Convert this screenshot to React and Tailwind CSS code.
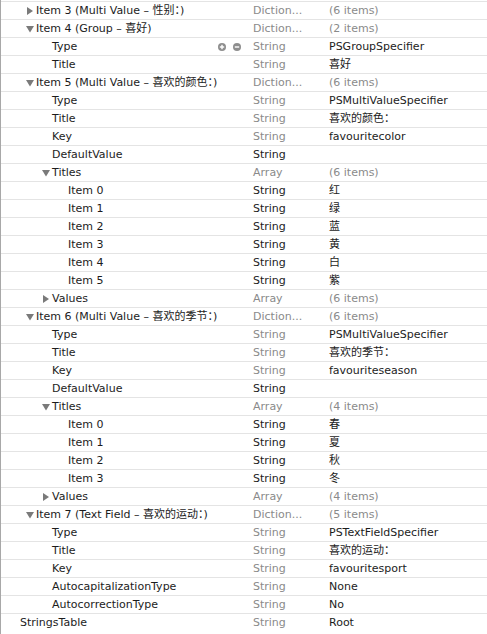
import React from "react";

const rows = [
  { lv: 1, ex: "closed", k: "Item 3 (Multi Value – 性别：)", t: "Diction...", v: "(6 items)", vg: true },
  { lv: 1, ex: "open", k: "Item 4 (Group – 喜好)", t: "Diction...", v: "(2 items)", vg: true },
  { lv: 2, k: "Type", t: "String", v: "PSGroupSpecifier", btns: true },
  { lv: 2, k: "Title", t: "String", v: "喜好" },
  { lv: 1, ex: "open", k: "Item 5 (Multi Value – 喜欢的颜色：)", t: "Diction...", v: "(6 items)", vg: true },
  { lv: 2, k: "Type", t: "String", v: "PSMultiValueSpecifier" },
  { lv: 2, k: "Title", t: "String", v: "喜欢的颜色：" },
  { lv: 2, k: "Key", t: "String", v: "favouritecolor" },
  { lv: 2, k: "DefaultValue", t: "String", v: "", td: true },
  { lv: 2, ex: "open", k: "Titles", t: "Array", v: "(6 items)", vg: true },
  { lv: 3, k: "Item 0", t: "String", v: "红", td: true },
  { lv: 3, k: "Item 1", t: "String", v: "绿", td: true },
  { lv: 3, k: "Item 2", t: "String", v: "蓝", td: true },
  { lv: 3, k: "Item 3", t: "String", v: "黄", td: true },
  { lv: 3, k: "Item 4", t: "String", v: "白", td: true },
  { lv: 3, k: "Item 5", t: "String", v: "紫", td: true },
  { lv: 2, ex: "closed", k: "Values", t: "Array", v: "(6 items)", vg: true },
  { lv: 1, ex: "open", k: "Item 6 (Multi Value – 喜欢的季节：)", t: "Diction...", v: "(6 items)", vg: true },
  { lv: 2, k: "Type", t: "String", v: "PSMultiValueSpecifier" },
  { lv: 2, k: "Title", t: "String", v: "喜欢的季节：" },
  { lv: 2, k: "Key", t: "String", v: "favouriteseason" },
  { lv: 2, k: "DefaultValue", t: "String", v: "", td: true },
  { lv: 2, ex: "open", k: "Titles", t: "Array", v: "(4 items)", vg: true },
  { lv: 3, k: "Item 0", t: "String", v: "春", td: true },
  { lv: 3, k: "Item 1", t: "String", v: "夏", td: true },
  { lv: 3, k: "Item 2", t: "String", v: "秋", td: true },
  { lv: 3, k: "Item 3", t: "String", v: "冬", td: true },
  { lv: 2, ex: "closed", k: "Values", t: "Array", v: "(4 items)", vg: true },
  { lv: 1, ex: "open", k: "Item 7 (Text Field – 喜欢的运动：)", t: "Diction...", v: "(5 items)", vg: true },
  { lv: 2, k: "Type", t: "String", v: "PSTextFieldSpecifier" },
  { lv: 2, k: "Title", t: "String", v: "喜欢的运动：" },
  { lv: 2, k: "Key", t: "String", v: "favouritesport" },
  { lv: 2, k: "AutocapitalizationType", t: "String", v: "None" },
  { lv: 2, k: "AutocorrectionType", t: "String", v: "No" },
  { lv: 0, k: "StringsTable", t: "String", v: "Root" },
];

// indent per nesting level (text start)
const pad = ["pl-[19px]", "pl-[35px]", "pl-[51px]", "pl-[67px]"];

const Disclosure = ({ open }) => (
  <svg width="8" height="8" viewBox="0 0 8 8" className="absolute left-[-10px] top-[2px]">
    {open ? <polygon points="0,1 8,1 4,7.5" fill="#7a7a7a" /> : <polygon points="1,0 7,4 1,8" fill="#7a7a7a" />}
  </svg>
);

const RoundBtn = ({ plus }) => (
  <svg width="8" height="8" viewBox="0 0 8 8">
    <circle cx="4" cy="4" r="4" fill="#8e8e8e" />
    <rect x="1.8" y="3.3" width="4.4" height="1.4" fill="#fff" />
    {plus && <rect x="3.3" y="1.8" width="1.4" height="4.4" fill="#fff" />}
  </svg>
);

export default function App() {
  return (
    <div
      className="w-[487px] h-[634px] bg-white border-l border-[#a8a8a8] pt-px overflow-hidden text-[11px] text-[#1c1c1c]"
      style={{ fontFamily: '"DejaVu Sans", "Noto Sans CJK SC", sans-serif' }}
    >
      {rows.map((r, i) => (
        <div key={i} className="flex h-[18px] items-center border-t border-[#e4e4e4] leading-none">
          <div className={`relative flex w-[252px] shrink-0 items-center ${pad[r.lv]}`}>
            <div className="relative">
              {r.ex && <Disclosure open={r.ex === "open"} />}
              <span className="whitespace-nowrap">{r.k}</span>
            </div>
            {r.btns && (
              <div className="absolute left-[217px] flex gap-[7px]">
                <RoundBtn plus />
                <RoundBtn />
              </div>
            )}
          </div>
          <div className={`w-[76px] shrink-0 whitespace-nowrap ${r.td ? "text-[#1c1c1c]" : "text-[#8a8a8a]"}`}>{r.t}</div>
          <div className={`whitespace-nowrap ${r.vg ? "text-[#8a8a8a]" : ""}`}>{r.v}</div>
        </div>
      ))}
    </div>
  );
}
